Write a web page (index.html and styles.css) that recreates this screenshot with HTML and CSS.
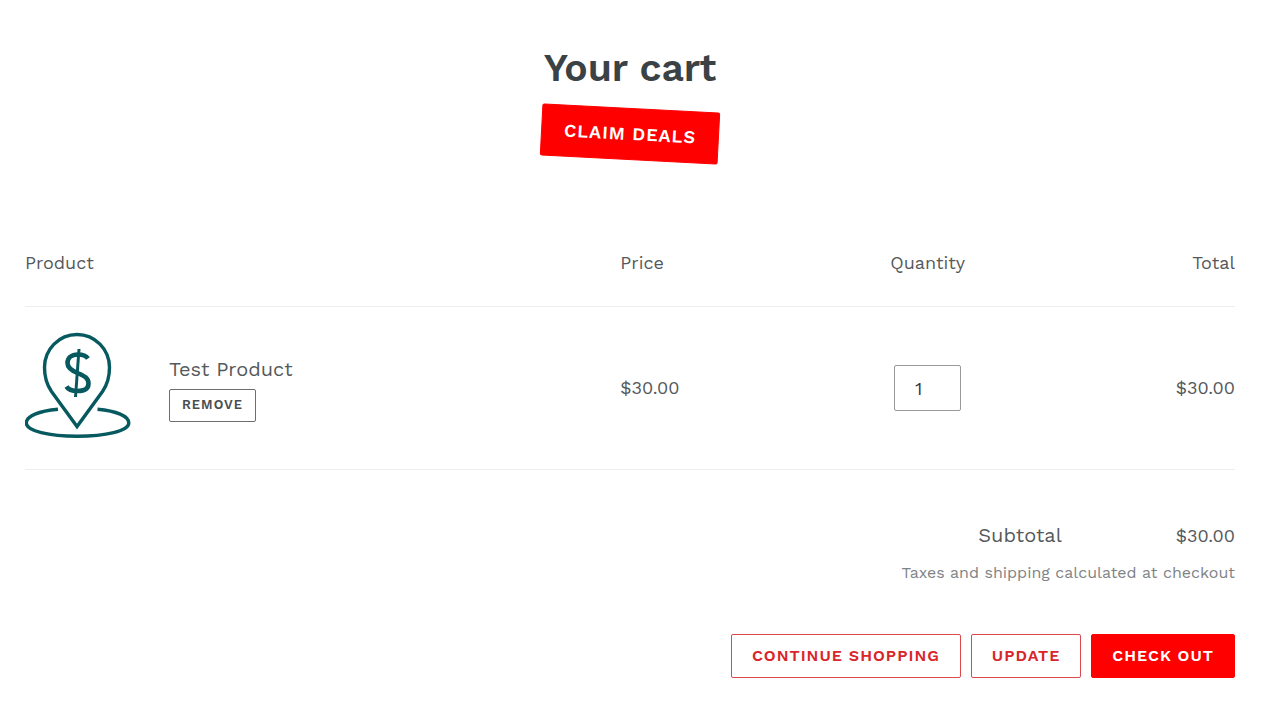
FILE: index.html
```html
<!DOCTYPE html>
<html lang="en">
<head>
<meta charset="utf-8">
<meta name="viewport" content="width=device-width, initial-scale=1">
<title>Your cart</title>
<link rel="stylesheet" href="styles.css">
</head>
<body>
<main class="cart">
  <header class="cart-header">
    <h1 class="cart-title">Your cart</h1>
    <button type="button" class="button button-solid button-deals">Claim deals</button>
  </header>
  <form class="cart-form">
    <table class="cart-table">
      <thead>
        <tr>
          <th class="col-product" scope="col">Product</th>
          <th class="col-price" scope="col">Price</th>
          <th class="col-quantity" scope="col">Quantity</th>
          <th class="col-total" scope="col">Total</th>
        </tr>
      </thead>
      <tbody>
        <tr>
          <td class="col-product">
            <div class="product">
              <svg class="product-image" viewBox="0 0 106 106" fill="none" stroke="#06595f" stroke-width="3.4" role="img" aria-label="Dollar sign on a map pin">
                <path d="M52 94.500 26.500 59.500C22 53 19.500 45 19.500 35.500a32.500 33 0 0 1 65 0C84.500 45 82 53 77.500 59.500Z"/>
                <path d="M33 77.300C14 79 1.300 84 1.300 91c0 8 22.800 13.300 51 13.300S103.800 99 103.800 91c0-7-12.500-12-31.300-13.700"/>
                <path stroke-width="4.600" d="M63 26.500C60.500 23 57 22.500 53 22.500 46 22.500 42.500 26.500 42.500 31c0 5 4 7.500 10 10 7 3 11 5 11 10.500S59 59 52.500 59c-4.500 0-9-1-11-4.500"/>
                <path stroke-width="3" d="M54 17 50.500 65"/>
              </svg>
              <div class="product-info">
                <span class="product-name">Test Product</span>
                <button type="button" class="button button-remove">Remove</button>
              </div>
            </div>
          </td>
          <td class="col-price">$30.00</td>
          <td class="col-quantity"><input class="quantity" type="text" inputmode="numeric" value="1" aria-label="Quantity"></td>
          <td class="col-total">$30.00</td>
        </tr>
      </tbody>
    </table>
    <div class="summary">
      <p class="subtotal"><span class="subtotal-label">Subtotal</span><span>$30.00</span></p>
      <p class="note">Taxes and shipping calculated at checkout</p>
      <div class="actions">
        <button type="button" class="button button-outline">Continue shopping</button>
        <button type="button" class="button button-outline">Update</button>
        <button type="button" class="button button-solid">Check out</button>
      </div>
    </div>
  </form>
</main>
</body>
</html>
```
FILE: styles.css
```css
* {
  box-sizing: border-box;
}

body {
  margin: 0;
  background: #fff;
  color: #55595c;
  font-family: "Work Sans", Inter, "Liberation Sans", sans-serif;
  font-size: 18px;
  line-height: 24px;
}

.cart {
  padding: 44px 45px 42px 25px;
}

.cart-header {
  display: flex;
  flex-direction: column;
  align-items: center;
  gap: 16px;
}

.cart-title {
  margin: 0;
  color: #3a4246;
  font-size: 39px;
  font-weight: 600;
  line-height: 48px;
}

.button {
  height: 44px;
  padding: 0 20px;
  border: 1px solid currentColor;
  border-radius: 2px;
  background: #fff;
  font-family: inherit;
  font-size: 16px;
  font-weight: 600;
  line-height: 20px;
  letter-spacing: 1px;
  text-transform: uppercase;
  white-space: nowrap;
  cursor: pointer;
}

.button-solid {
  border-color: #f00;
  background: #f00;
  color: #fff;
}

.button-outline {
  border-color: #dc4a4e;
  color: #d9262b;
}

.button-deals {
  height: 52px;
  padding: 0 22px;
  font-size: 18px;
  transform: rotate(3deg);
}

.button-remove {
  height: 33px;
  padding: 0 12px;
  border-color: #6b6f72;
  color: #4a4e51;
  font-size: 13px;
}

.cart-table {
  width: 100%;
  margin-top: 60px;
  border-collapse: collapse;
  table-layout: fixed;
}

.cart-table th,
.cart-table td {
  padding: 0;
  border-bottom: 1px solid #ededed;
  font-weight: 400;
  text-align: left;
}

.cart-table th {
  padding: 31px 0;
}

.cart-table td.col-product {
  padding: 25px 0 31px;
}

.cart-table .col-product {
  width: 49.2%;
}

.cart-table .col-price {
  width: 15%;
}

.cart-table .col-quantity {
  width: 20.8%;
  text-align: center;
}

.cart-table .col-total {
  text-align: right;
}

.product {
  display: flex;
  align-items: center;
  gap: 38px;
}

.product-image {
  width: 106px;
  height: 106px;
}

.product-info {
  display: flex;
  flex-direction: column;
  align-items: flex-start;
  gap: 8px;
  padding-top: 8px;
}

.product-name {
  font-size: 20px;
}

.quantity {
  width: 67px;
  height: 46px;
  padding: 0 20px;
  border: 1px solid #999;
  border-radius: 2px;
  background: #fff;
  color: #333;
  font-family: inherit;
  font-size: 18px;
}

.summary {
  display: flex;
  flex-direction: column;
  align-items: flex-end;
  padding-top: 53px;
}

.subtotal {
  display: flex;
  align-items: baseline;
  gap: 114px;
  margin: 0;
}

.subtotal-label {
  font-size: 20px;
}

.note {
  margin: 13px 0 49px;
  color: #808386;
  font-size: 16px;
}

.actions {
  display: flex;
  flex-wrap: wrap;
  justify-content: flex-end;
  gap: 10px;
}
```
